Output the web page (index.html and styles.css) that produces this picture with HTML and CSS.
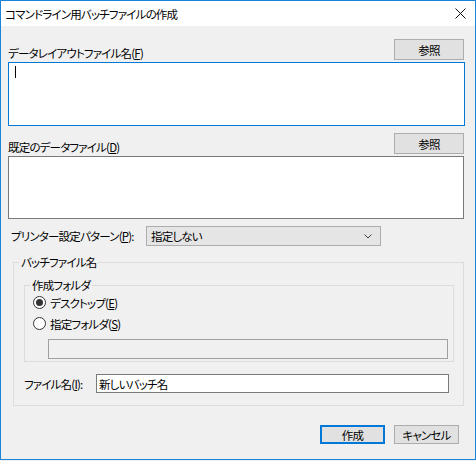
FILE: index.html
```html
<!DOCTYPE html>
<html lang="ja">
<head>
<meta charset="utf-8">
<link rel="stylesheet" href="styles.css">
</head>
<body>
<div class="window">
  <div class="titlebar">
    <span class="title">コマンドライン用バッチファイルの作成</span>
    <svg class="close" width="11" height="11" viewBox="0 0 11 11"><path d="M0.5 0.5 L10.5 10.5 M10.5 0.5 L0.5 10.5" stroke="#111" stroke-width="1" fill="none"/></svg>
  </div>
  <div class="content">
    <div class="head-row">
      <span class="label">データレイアウトファイル名(<u>F</u>)</span>
      <button class="btn browse">参照</button>
    </div>
    <div class="textbox focused"><span class="caret"></span></div>
    <div class="head-row second">
      <span class="label">既定のデータファイル(<u>D</u>)</span>
      <button class="btn browse">参照</button>
    </div>
    <div class="textbox second-box"></div>
    <div class="printer-row">
      <span class="label printer-label">プリンター設定パターン(<u>P</u>):</span>
      <div class="combo">
        <span>指定しない</span>
        <svg class="chevron" width="8" height="5" viewBox="0 0 8 5"><path d="M0.5 0.5 L4 4 L7.5 0.5" stroke="#444" stroke-width="1" fill="none"/></svg>
      </div>
    </div>
    <fieldset class="group outer">
      <legend>バッチファイル名</legend>
      <fieldset class="group inner">
        <legend>作成フォルダ</legend>
        <div class="radio-row"><span class="radio checked"></span><span>デスクトップ(<u>E</u>)</span></div>
        <div class="radio-row"><span class="radio"></span><span>指定フォルダ(<u>S</u>)</span></div>
        <div class="input disabled"></div>
      </fieldset>
      <div class="name-row">
        <span class="label name-label">ファイル名(<u>I</u>):</span>
        <div class="input">新しいバッチ名</div>
      </div>
    </fieldset>
    <div class="actions">
      <button class="btn default">作成</button>
      <button class="btn">キャンセル</button>
    </div>
  </div>
</div>
</body>
</html>
```
FILE: styles.css
```css
html, body {
  margin: 0;
  padding: 0;
  background: #f0f0f0;
}
body {
  font-family: "Noto Sans CJK JP", "Noto Sans", sans-serif;
  font-size: 11.5px;
  line-height: 14px;
  color: #000;
  font-feature-settings: "palt";
  letter-spacing: -0.8px;
}
u { text-decoration-thickness: 1px; text-underline-offset: 1px; }
.label { white-space: nowrap; }
.window {
  width: 476px;
  height: 460px;
  box-sizing: border-box;
  border: 1px solid #1883d7;
  display: flex;
  flex-direction: column;
  background: #f0f0f0;
}
.titlebar {
  height: 25px;
  background: #fff;
  display: flex;
  align-items: center;
  justify-content: space-between;
  padding: 0 9px 0 4px;
  flex: 0 0 auto;
}
.close { margin-top: -1px; }
.content {
  flex: 1;
  padding: 13px 10px 0 7px;
  display: flex;
  flex-direction: column;
}
.head-row {
  height: 21px;
  display: flex;
  justify-content: space-between;
  align-items: flex-end;
}
.head-row.second { margin-top: 7px; }
.btn {
  font: inherit;
  letter-spacing: inherit;
  font-feature-settings: inherit;
  color: #000;
  background: #e1e1e1;
  border: 1px solid #adadad;
  padding: 0;
  margin: 0;
  box-sizing: border-box;
  height: 20px;
  width: 65px;
}
.btn.browse { width: 70px; height: 21px; margin-right: 1px; }
.btn.default {
  border-color: #0078d7;
  box-shadow: inset 0 0 0 1px #0078d7;
}
.textbox {
  margin-top: 2px;
  height: 64px;
  box-sizing: border-box;
  background: #fff;
  border: 1px solid #7a7a7a;
  position: relative;
}
.textbox.focused { border-color: #0078d7; }
.textbox.second-box { height: 63px; margin-right: 1px; }
.caret {
  position: absolute;
  left: 6px;
  top: 3px;
  width: 1px;
  height: 12px;
  background: #000;
}
.printer-row {
  margin-top: 7px;
  height: 20px;
  display: flex;
  align-items: center;
}
.printer-label { flex: 0 0 138px; padding-left: 3px; box-sizing: border-box; }
.combo {
  flex: 0 0 235px;
  height: 20px;
  box-sizing: border-box;
  background: #e5e5e5;
  border: 1px solid #adadad;
  display: flex;
  align-items: center;
  justify-content: space-between;
  padding: 0 8px 0 4px;
}
.group {
  border: 1px solid #dcdcdc;
  margin: 0;
  min-width: 0;
}
.group legend {
  padding: 0 2px;
  line-height: 14px;
}
.group.outer {
  margin: 9px 1px 0 5px;
  padding: 9px 9px 12px 10px;
}
.group.outer > legend { margin-left: -5px; }
.group.inner {
  padding: 0 5px 2px 8px;
}
.group.inner > legend { margin-left: -3px; }
.radio-row {
  height: 21px;
  display: flex;
  align-items: center;
  gap: 4px;
}
.radio {
  width: 13px;
  height: 13px;
  box-sizing: border-box;
  border: 1px solid #333;
  border-radius: 50%;
  background: #fff;
  display: flex;
  align-items: center;
  justify-content: center;
}
.radio.checked::after {
  content: "";
  width: 7px;
  height: 7px;
  border-radius: 50%;
  background: #333;
}
.input {
  height: 19px;
  box-sizing: border-box;
  background: #fff;
  border: 1px solid #7a7a7a;
  padding: 0 2px;
  display: flex;
  align-items: center;
}
.input.disabled {
  margin: 5px 0 0 15px;
  height: 20px;
  background: #f0f0f0;
  border-color: #a0a0a0;
}
.name-row {
  margin-top: 12px;
  display: flex;
  align-items: center;
}
.name-label { flex: 0 0 72px; }
.name-row .input { flex: 1; margin-right: 5px; }
.actions {
  margin-top: 19px;
  display: flex;
  justify-content: flex-end;
  gap: 9px;
  padding-right: 6px;
}
.actions .btn { height: 19px; }
```
